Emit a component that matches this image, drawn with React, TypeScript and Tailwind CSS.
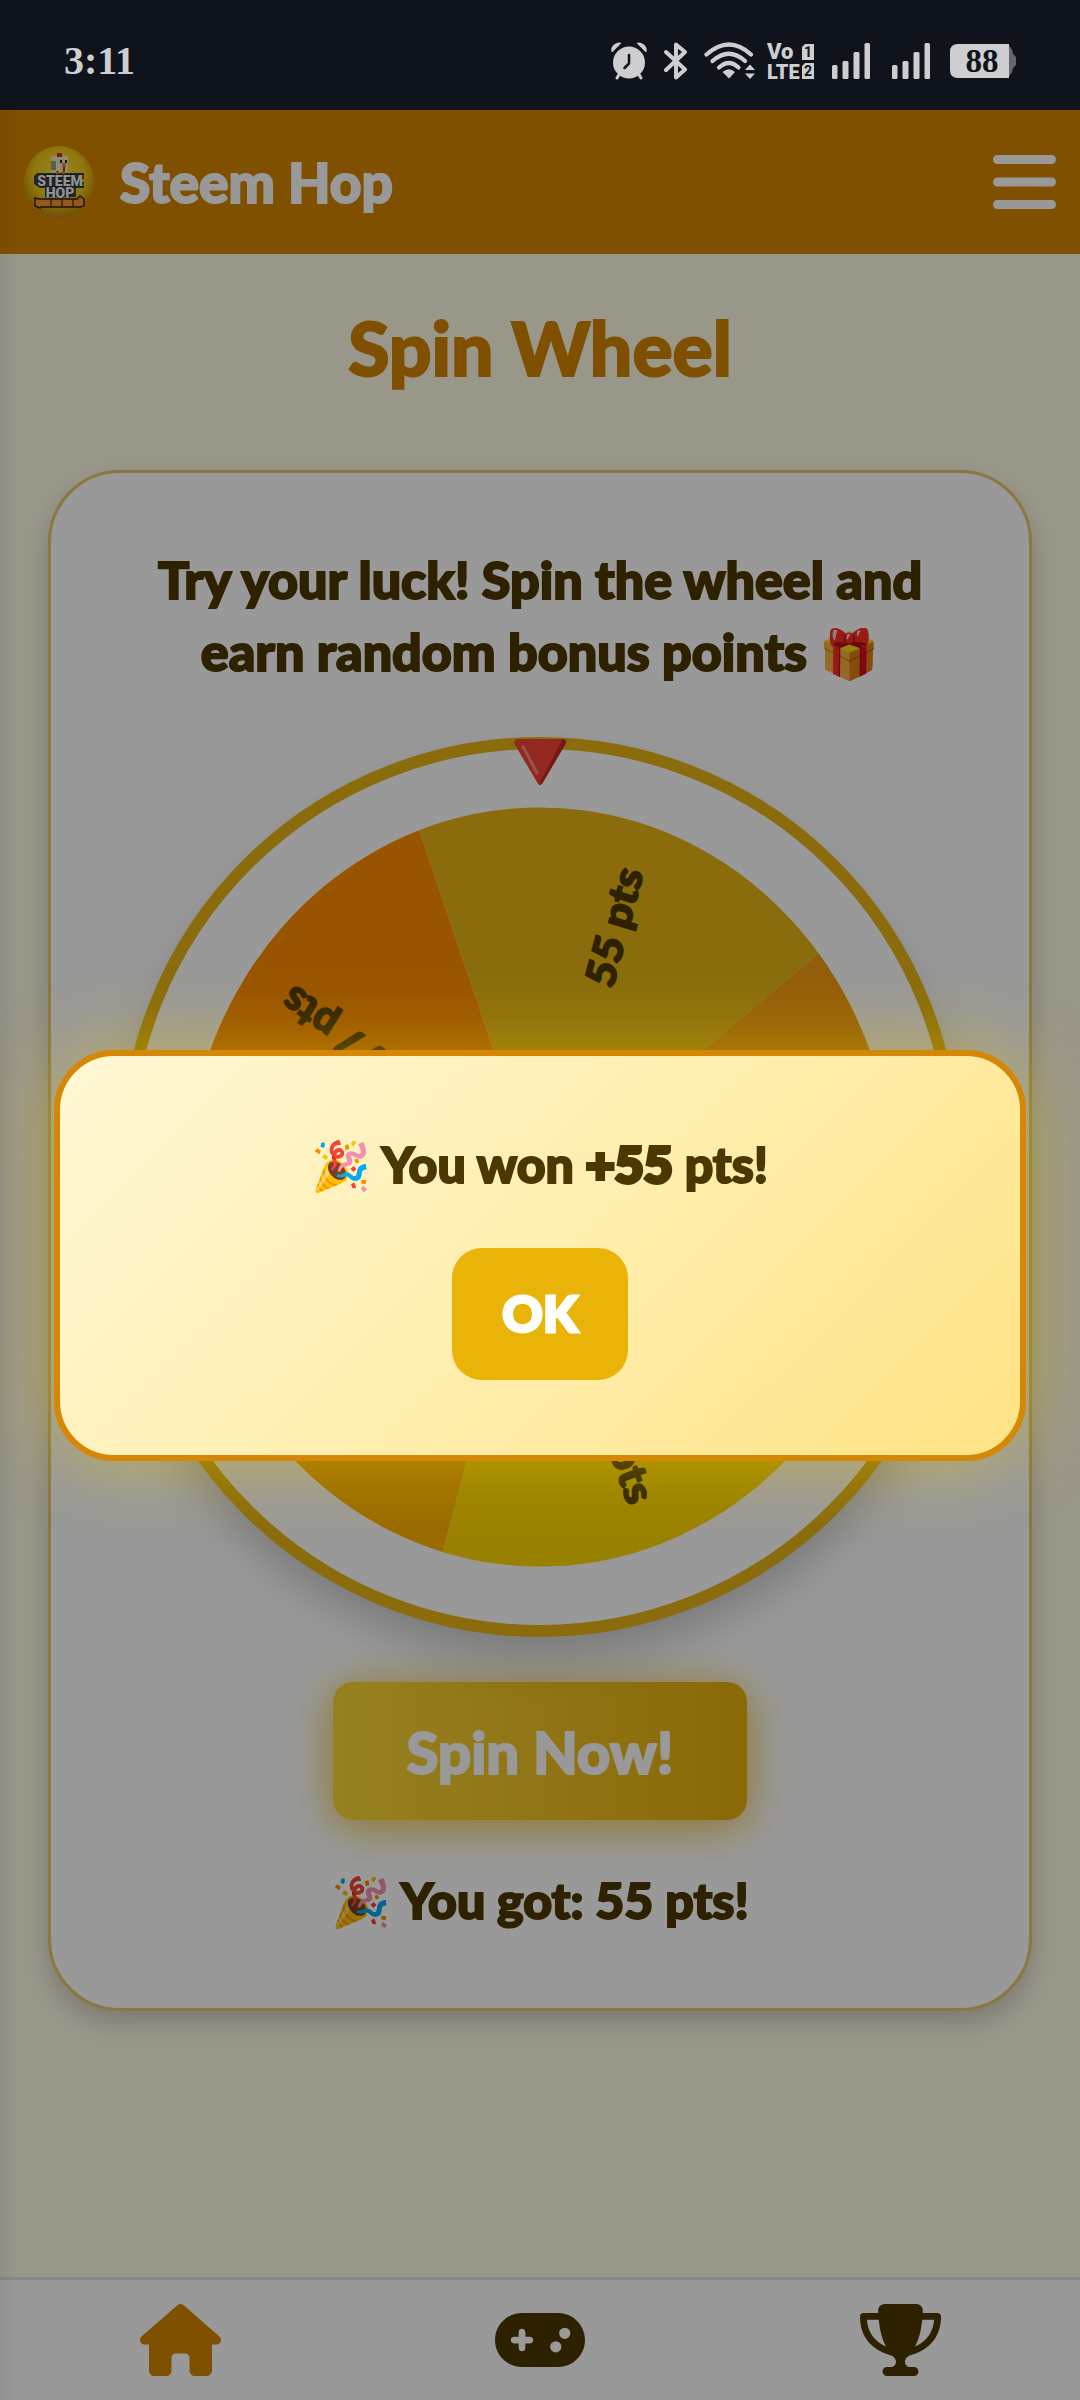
import type { ReactNode } from 'react'
import { FaBars, FaGamepad, FaHouse, FaTrophy } from 'react-icons/fa6'

interface Slice {
  points: number
  color: string
}

const SLICES: Slice[] = [
  { points: 55, color: '#e6b417' },
  { points: 11, color: '#f39c12' },
  { points: 33, color: '#ffd700' },
  { points: 22, color: '#ffb300' },
  { points: 77, color: '#ff8c00' },
]

const SLICE_ANGLE = 360 / SLICES.length
const WHEEL_OFFSET = -20
const RADIUS = 130

function pointAt(angle: number) {
  const rad = ((angle - 90) * Math.PI) / 180
  return `${RADIUS * Math.cos(rad)} ${RADIUS * Math.sin(rad)}`
}

function SignalBars() {
  return (
    <svg viewBox="0 0 38 36" className="h-9 w-[38px]" fill="currentColor" aria-hidden="true">
      <rect x="0" y="22" width="5.5" height="14" rx="1.5" />
      <rect x="10.5" y="18" width="6" height="18" rx="1.5" />
      <rect x="21.5" y="9" width="6" height="27" rx="1.5" />
      <rect x="32.5" y="0" width="5.5" height="36" rx="1.5" />
    </svg>
  )
}

function StatusBar() {
  return (
    <div className="flex h-[110px] items-center justify-between bg-[#0f131b] pt-3 pr-16 pl-16 text-[#ceced0]">
      <span className="font-['Liberation_Serif',serif] text-[40px] leading-none font-bold">3:11</span>
      <div className="flex items-center">
        {/* Alarm */}
        <svg viewBox="0 0 38 38" className="mr-4 size-[38px]" aria-hidden="true">
          <path d="M10 31l-3 5M28 31l3 5" stroke="currentColor" fill="none" strokeWidth="3" strokeLinecap="round" />
          <circle cx="19" cy="20.5" r="16" fill="currentColor" />
          <path d="M1.5 9.5C0 5 5 .5 9.5 .5q2 0 1.5 1L3 9.5q-1 1-1.5 0zM36.5 9.5C38 5 33 .5 28.5 .5q-2 0-1.5 1L35 9.5q1 1 1.5 0z" fill="currentColor" />
          <path d="M19 13v8.5l-4.5 4.5" fill="none" stroke="#0f131b" strokeWidth="2.5" strokeLinecap="round" />
        </svg>
        {/* Bluetooth */}
        <svg viewBox="0 0 24 38" className="mr-4 h-[38px] w-6" fill="none" stroke="currentColor" strokeWidth="4" strokeLinejoin="round" strokeLinecap="round" aria-hidden="true">
          <path d="M2 10l19 17.5L12 35.5V2.5l9 7.5L2 28" />
        </svg>
        {/* Wi-Fi with traffic arrows */}
        <svg viewBox="0 0 51 38" className="mr-3 h-[38px] w-[51px]" aria-hidden="true">
          <g fill="none" stroke="currentColor" strokeWidth="4.2" strokeLinecap="round">
            <path d="M2.5 12.5Q25 -7.5 47 12.5" />
            <path d="M8.5 19Q25 4.5 41 19" />
            <path d="M15 25.5Q25 16.5 34.5 25.5" />
          </g>
          <path d="M18.5 30Q25 24.5 31 30L25 36.5zM41 28l5-5.5 5 5.5zM41 31.5h10l-5 5.5z" fill="currentColor" />
        </svg>
        {/* VoLTE badge */}
        <svg viewBox="0 0 47 38" className="mr-[18px] h-[38px] w-[47px] overflow-visible" fill="currentColor" aria-hidden="true">
          <g className="font-['Roboto',sans-serif] font-black">
            <text x="0" y="17" fontSize="22">Vo</text>
            <text x="0" y="37" fontSize="20">LTE</text>
          </g>
          <path d="M38 2h9v16H35V5zM38 21h9v16H35V24z" />
          <g fill="#0f131b" className="font-['Roboto',sans-serif] font-bold">
            <text x="41" y="15" fontSize="14" textAnchor="middle">1</text>
            <text x="41" y="34" fontSize="14" textAnchor="middle">2</text>
          </g>
        </svg>
        <SignalBars />
        <span className="w-[22px]" />
        <SignalBars />
        {/* Battery */}
        <svg viewBox="0 0 66 34" className="ml-5 h-[34px] w-[66px]" aria-hidden="true">
          <path d="M52 0q10 0 11 10l3 3v8l-3 3q-1 10-11 10z" fill="#64676c" />
          <path d="M8 0h51v34H8q-8 0-8-8V8q0-8 8-8z" fill="currentColor" />
          <text x="32" y="28" textAnchor="middle" fontSize="33" fill="#0f131b" className="font-['Liberation_Serif',serif] font-bold">88</text>
        </svg>
      </div>
    </div>
  )
}

function Logo() {
  return (
    <svg viewBox="0 0 70 72" className="h-[72px] w-[70px]" role="img" aria-label="Steem Hop logo">
      <defs>
        <radialGradient id="logo-ball" cx="0.5" cy="0.4" r="0.6">
          <stop offset="0" stopColor="#ffe23c" />
          <stop offset="0.6" stopColor="#f0c814" />
          <stop offset="1" stopColor="#b9820c" />
        </radialGradient>
      </defs>
      <ellipse cx="35" cy="36" rx="35" ry="36" fill="url(#logo-ball)" />
      <path d="M13 27l-3 3v8l6 4h5v9h31V42h8V27z" fill="#3a4148" />
      <rect x="27" y="10" width="17" height="16" rx="1" fill="#eee4c4" />
      <path d="M27 15h5v9h-5z" fill="#8ca078" />
      <path d="M33 7h5v4h-5z" fill="#c8281e" />
      <path d="M36 14h2v3h-2zM41 14h2v3h-2z" fill="#22262a" />
      <path d="M38 17h4v4h-4z" fill="#f08c1e" />
      <path d="M39 21h2v4h-2z" fill="#c8281e" />
      <path d="M32 25h3v4h-3zM38 25h3v4h-3z" fill="#dc7814" />
      <path d="M11 52l4 1h38l3-3 4 3v7l-4 1H17l-1 1-5-2z" fill="#f09632" stroke="#3c1e0a" strokeWidth="1.5" />
      <path d="M27 53v8M38 53v8M49 53v8" stroke="#4b2608" strokeWidth="1.2" />
      <g
        fill="#f4f4f4"
        stroke="#22262a"
        strokeWidth="1.5"
        textAnchor="middle"
        className="font-['Roboto',sans-serif] font-black [paint-order:stroke]"
      >
        <text x="36" y="40" fontSize="14">STEEM</text>
        <text x="36" y="52" fontSize="14">HOP</text>
      </g>
      <path d="M58 29h2v3h-2z" fill="#dc281e" />
      <path d="M58 33h2v3h-2z" fill="#f0c814" />
      <path d="M58 37h2v3h-2z" fill="#28a03c" />
    </svg>
  )
}

function Wheel() {
  return (
    <div className="relative mt-[50px] h-[900px] w-full max-w-[840px] rounded-full border-[12px] border-[#e6b417] bg-white shadow-[0_24px_48px_-6px_rgba(0,0,0,0.22)]">
      <svg viewBox="-150 -150 300 300" preserveAspectRatio="none" className="size-full" role="img" aria-label="Prize wheel">
        {SLICES.map((slice, i) => {
          const start = WHEEL_OFFSET + i * SLICE_ANGLE
          return (
            <g key={slice.points}>
              <path
                d={`M0 0L${pointAt(start)}A${RADIUS} ${RADIUS} 0 0 1 ${pointAt(start + SLICE_ANGLE)}Z`}
                fill={slice.color}
              />
              <text
                x="114"
                y="7"
                textAnchor="end"
                fontSize="15"
                fill="#4b3700"
                stroke="#4b3700"
                strokeWidth="0.6"
                transform={`rotate(${start + SLICE_ANGLE / 2 - 90})`}
                className="font-['Lato',sans-serif] font-black"
              >
                {slice.points} pts
              </text>
            </g>
          )
        })}
      </svg>
      {/* Pointer sits on top of the rim */}
      <svg viewBox="0 0 52 46" className="absolute -top-2.5 left-1/2 h-[46px] w-[52px] -translate-x-1/2" aria-hidden="true">
        <path d="M3 0h46q4 1 2.5 5L28.5 44q-2.5 4-5 0L.5 5Q-1 1 3 0z" fill="#f44336" />
        <path d="M49 0q4 1 2.5 5L28.5 44q-1.5 2.5-3.5 1.5L47 3z" fill="#c62828" />
        <path d="M9 7.5L23 34" stroke="#ff8a80" strokeWidth="3" strokeLinecap="round" />
      </svg>
    </div>
  )
}

function NavLink({ label, active, children }: { label: string; active?: boolean; children: ReactNode }) {
  return (
    <a
      href="#"
      aria-label={label}
      className={`flex flex-1 items-center justify-center ${active ? 'text-[#d48500]' : 'text-[#4b3700]'}`}
    >
      {children}
    </a>
  )
}

function WinDialog() {
  return (
    <div className="absolute inset-0 flex items-center justify-center bg-black/40">
      <div
        role="dialog"
        aria-label="Spin result"
        className="flex w-[90%] flex-col items-center gap-12 rounded-[60px] border-[6px] border-[#d48806] bg-linear-135 from-[#fff8d6] to-[#ffe484] px-12 pt-[72px] pb-[75px] shadow-[0_0_80px_rgba(255,215,0,0.42)]"
      >
        <p className="text-[50px] leading-[72px]">
          <span className="text-5xl leading-none">🎉</span> You won <strong className="font-black [-webkit-text-stroke:4px_currentColor]">+55</strong> pts!
        </p>
        <button type="button" className="h-[132px] rounded-[30px] bg-[#eab308] px-[50px] text-[50px] text-white [-webkit-text-stroke:3px_currentColor]">
          OK
        </button>
      </div>
    </div>
  )
}

export default function App() {
  return (
    <div className="flex min-h-screen flex-col font-['Lato','Noto_Color_Emoji',sans-serif] text-[52px] font-black text-[#4b3700]">
      <StatusBar />

      <div className="relative flex flex-1 flex-col bg-[#fffae6] [-webkit-text-stroke:2px_currentColor]">
        <header className="flex h-36 items-center justify-between bg-[#d48500] px-6 text-white">
          <div className="flex items-center gap-[26px]">
            <Logo />
            <span className="text-[55px] leading-none">Steem Hop</span>
          </div>
          <button type="button" aria-label="Open menu">
            <FaBars className="h-[72px] w-[63px]" />
          </button>
        </header>

        <main className="flex flex-1 flex-col px-12 pt-[45px]">
          <h1 className="mb-[75px] text-center text-[75px] leading-[96px] text-[#d48500]">Spin Wheel</h1>

          <section className="flex flex-col items-center rounded-[72px] border-[3px] border-[#e6c869] bg-white px-16 pt-[70px] pb-[72px] text-center shadow-[0_12px_24px_rgba(0,0,0,0.18)]">
            <p className="max-w-[800px] leading-[72px]">
              Try your luck! Spin the wheel and earn random bonus points <span className="text-5xl leading-none">🎁</span>
            </p>

            <Wheel />

            <button
              type="button"
              className="mt-[45px] h-[138px] rounded-[20px] bg-linear-to-r from-[#fad735] to-[#e6af0a] px-[74px] text-[58px] text-white shadow-[0_6px_45px_rgba(234,179,8,0.8)]"
            >
              Spin Now!
            </button>

            <p className="mt-11 text-[50px] leading-[72px]">
              <span className="text-5xl leading-none">🎉</span> You got: 55 pts!
            </p>
          </section>
        </main>

        <nav className="flex h-[123px] border-t-[3px] border-[#e6e6e6] bg-white">
          <NavLink label="Home" active>
            <FaHouse className="h-[72px] w-[81px]" />
          </NavLink>
          <NavLink label="Games">
            <FaGamepad className="h-[72px] w-[90px]" />
          </NavLink>
          <NavLink label="Leaderboard">
            <FaTrophy className="h-[72px] w-[81px]" />
          </NavLink>
        </nav>

        <div className="pointer-events-none absolute inset-y-0 left-0 w-5 bg-linear-to-r from-black/5 to-transparent" />

        <WinDialog />
      </div>
    </div>
  )
}
